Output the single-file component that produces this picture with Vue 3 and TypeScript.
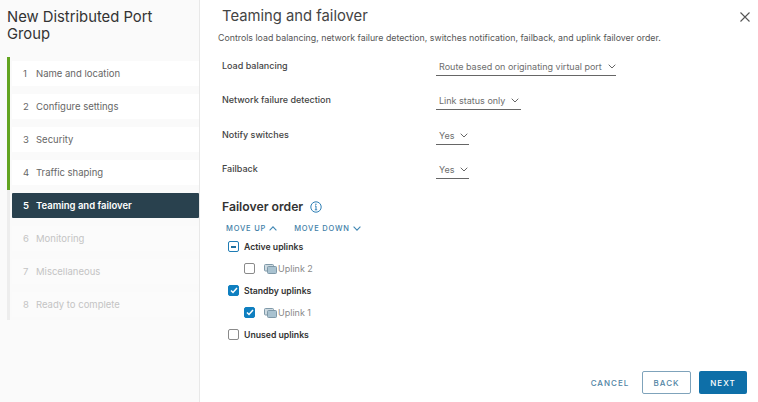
<script setup lang="ts">
const steps = [
  { n: 1, label: 'Name and location', state: 'done' },
  { n: 2, label: 'Configure settings', state: 'done' },
  { n: 3, label: 'Security', state: 'done' },
  { n: 4, label: 'Traffic shaping', state: 'done' },
  { n: 5, label: 'Teaming and failover', state: 'active' },
  { n: 6, label: 'Monitoring', state: 'off' },
  { n: 7, label: 'Miscellaneous', state: 'off' },
  { n: 8, label: 'Ready to complete', state: 'off' },
]
const fields = [
  { label: 'Load balancing', value: 'Route based on originating virtual port', width: 180 },
  { label: 'Network failure detection', value: 'Link status only', width: 85 },
  { label: 'Notify switches', value: 'Yes', width: 33 },
  { label: 'Failback', value: 'Yes', width: 33 },
]
const tree = [
  { label: 'Active uplinks', child: false, box: 'mixed' },
  { label: 'Uplink 2', child: true, box: 'empty' },
  { label: 'Standby uplinks', child: false, box: 'checked' },
  { label: 'Uplink 1', child: true, box: 'checked' },
  { label: 'Unused uplinks', child: false, box: 'empty' },
]
</script>

<template>
  <div class="wizard">
    <aside class="side">
      <h1 class="side-title">New Distributed Port Group</h1>
      <ol class="steps">
        <li v-for="s in steps" :key="s.n" class="step" :class="s.state">
          <span class="num">{{ s.n }}</span><span>{{ s.label }}</span>
        </li>
      </ol>
    </aside>
    <main class="main">
      <header class="head">
        <h2 class="title">Teaming and failover</h2>
        <svg class="close" width="10" height="10" viewBox="0 0 10 10"><path d="M.5.5l9 9M9.5.5l-9 9" stroke="#555" stroke-width="1.1" fill="none" /></svg>
      </header>
      <p class="desc">Controls load balancing, network failure detection, switches notification, failback, and uplink failover order.</p>
      <div class="form">
        <div v-for="f in fields" :key="f.label" class="row">
          <label class="lab">{{ f.label }}</label>
          <div class="select" :style="{ width: f.width + 'px' }">
            <span>{{ f.value }}</span>
            <svg width="8" height="5" viewBox="0 0 8 5"><path d="M.7.7L4 4l3.3-3.3" stroke="#666" stroke-width="1" fill="none" /></svg>
          </div>
        </div>
      </div>
      <div class="fo-head">
        <h3 class="fo-title">Failover order</h3>
        <svg width="12" height="12" viewBox="0 0 12 12"><circle cx="6" cy="6" r="5.2" stroke="#2f7fb5" stroke-width="1" fill="none" /><path d="M6 5v3.6M4.8 8.8h2.4M5 5h1" stroke="#2f7fb5" stroke-width="1" fill="none" /><circle cx="5.9" cy="3.2" r=".7" fill="#2f7fb5" /></svg>
      </div>
      <div class="moves">
        <span class="move">MOVE UP <svg width="8" height="5" viewBox="0 0 8 5"><path d="M.6 4.3L4 .9l3.4 3.4" stroke="#3f86b3" stroke-width="1.1" fill="none" /></svg></span>
        <span class="move">MOVE DOWN <svg width="8" height="5" viewBox="0 0 8 5"><path d="M.6.7L4 4.1 7.4.7" stroke="#3f86b3" stroke-width="1.1" fill="none" /></svg></span>
      </div>
      <ul class="tree">
        <li v-for="t in tree" :key="t.label" class="node" :class="{ child: t.child }">
          <span class="box" :class="t.box">
            <svg v-if="t.box === 'checked'" width="8" height="7" viewBox="0 0 8 7"><path d="M1 3.5l2 2L7 1" stroke="#fff" stroke-width="1.5" fill="none" /></svg>
            <i v-if="t.box === 'mixed'" class="dash"></i>
          </span>
          <svg v-if="t.child" class="uplink" width="13" height="10" viewBox="0 0 13 10">
            <rect x=".5" y=".5" width="9" height="6.5" rx="1" fill="#cfdbe2" stroke="#7f99a8" />
            <rect x="3.5" y="2.5" width="9" height="7" rx="1" fill="#a9c2d0" stroke="#7f99a8" />
          </svg>
          <span :class="t.child ? 'leaf' : 'parent'">{{ t.label }}</span>
        </li>
      </ul>
      <footer class="foot">
        <button class="btn link">CANCEL</button>
        <button class="btn outline">BACK</button>
        <button class="btn solid">NEXT</button>
      </footer>
    </main>
  </div>
</template>

<style scoped>
.wizard {
  display: flex;
  width: 758px;
  height: 402px;
  overflow: hidden;
  background: #fff;
  font-family: Inter, "Liberation Sans", sans-serif;
  color: #565656;
}
.side {
  width: 200px;
  flex: none;
  box-sizing: border-box;
  background: #fafafa;
  border-right: 1px solid #e8e8e8;
  padding: 9px 0 0 7px;
}
.side-title {
  margin: 0;
  width: 170px;
  font-size: 14.8px;
  font-weight: 400;
  line-height: 16.5px;
  color: #333;
}
.steps {
  list-style: none;
  margin: 15px 0 0;
  padding: 4px 0 3px 5px;
  border-left: 3px solid #ededed;
  position: relative;
  display: flex;
  flex-direction: column;
  gap: 8px;
}
.steps::before {
  content: "";
  position: absolute;
  left: -3px;
  top: 0;
  width: 3px;
  height: 133px;
  background: #62a420;
}
.step {
  height: 25px;
  display: flex;
  align-items: center;
  padding-left: 11px;
  font-size: 9.5px;
  color: #666;
  background: #fff;
  margin-left: -3px;
}
.num {
  width: 13px;
}
.step.active {
  background: #29414e;
  color: #fff;
  font-weight: 600;
  border-radius: 1px;
}
.step.off {
  background: #fbfbfb;
  color: #c4c4c4;
}
.main {
  flex: 1;
  min-width: 0;
  display: flex;
  flex-direction: column;
  padding: 0 11px 8px 18px;
}
.head {
  display: flex;
  justify-content: space-between;
  align-items: center;
  padding: 8px 0 0 4px;
  height: 17px;
}
.title {
  margin: 0;
  font-size: 14.8px;
  font-weight: 400;
  color: #444;
  line-height: 17px;
}
.close {
  margin-right: -3px;
}
.desc {
  margin: 6px 0 0;
  font-size: 8.8px;
  line-height: 14px;
  color: #565656;
  white-space: nowrap;
}
.form {
  margin: 14px 0 0 4px;
  display: flex;
  flex-direction: column;
  gap: 17.3px;
}
.row {
  display: flex;
  height: 17px;
}
.lab {
  width: 214px;
  font-size: 9px;
  font-weight: 500;
  color: #444;
  line-height: 14px;
}
.select {
  box-sizing: border-box;
  height: 17px;
  padding: 0 0 0 3px;
  border-bottom: 1px solid #666;
  display: flex;
  align-items: flex-start;
  gap: 6px;
  font-size: 9px;
  line-height: 15px;
  color: #6e6e6e;
  white-space: nowrap;
}
.select svg {
  margin-top: 5px;
}
.fo-head {
  margin: 20px 0 0 4px;
  display: flex;
  align-items: center;
  gap: 7px;
  height: 16px;
}
.fo-title {
  margin: 0;
  font-size: 12.2px;
  font-weight: 600;
  color: #333;
}
.moves {
  margin: 8px 0 0 8px;
  display: flex;
  gap: 17px;
  height: 12px;
  align-items: center;
}
.move {
  display: inline-flex;
  align-items: center;
  gap: 3px;
  font-size: 7.5px;
  font-weight: 500;
  letter-spacing: 0.8px;
  color: #3f7fa8;
}
.tree {
  list-style: none;
  margin: 1px 0 0 10px;
  padding: 0;
}
.node {
  height: 22px;
  display: flex;
  align-items: center;
  gap: 5px;
}
.node.child {
  padding-left: 16px;
  gap: 6px;
}
.box {
  box-sizing: border-box;
  width: 11px;
  height: 11px;
  border-radius: 2px;
  border: 1px solid #8a8a8a;
  display: flex;
  align-items: center;
  justify-content: center;
  background: #fff;
}
.box.checked {
  background: #0f7fc0;
  border-color: #0f7fc0;
}
.box.mixed {
  border-color: #1f7cb5;
}
.dash {
  width: 5px;
  height: 1.5px;
  background: #1f6f9f;
}
.uplink {
  margin-left: 3px;
  margin-right: -5px;
}
.parent {
  font-size: 8.7px;
  font-weight: 600;
  color: #333;
}
.leaf {
  font-size: 9px;
  color: #8a8a8a;
}
.foot {
  margin-top: auto;
  display: flex;
  justify-content: flex-end;
  align-items: center;
  gap: 8px;
}
.btn {
  box-sizing: border-box;
  height: 23px;
  padding: 0;
  font-family: inherit;
  font-size: 8px;
  font-weight: 500;
  letter-spacing: 1px;
  border-radius: 2px;
  border: 1px solid transparent;
}
.link {
  width: 46px;
  margin-right: 1px;
  background: none;
  color: #4f83a3;
}
.outline {
  width: 49px;
  background: #fff;
  border-color: #7fa3bb;
  color: #4f83a3;
}
.solid {
  width: 48px;
  background: #0e6fa8;
  color: #fff;
}
</style>
